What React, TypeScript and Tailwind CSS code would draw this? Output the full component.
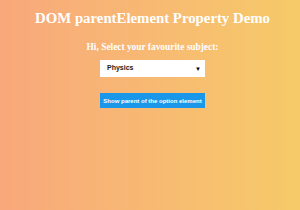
export default function App() {
  return (
    <div className="w-[300px] h-[210px] bg-linear-to-r from-[#f8a87b] to-[#f6ca68] flex flex-col items-center overflow-hidden pl-[5px]">
      <h1 className="mt-[8px] text-white text-[14.8px] font-bold leading-[20px] font-['Liberation_Serif',serif]">
        DOM parentElement Property Demo
      </h1>
      <h3 className="mt-[13px] text-white text-[9.4px] font-bold leading-[12px] font-['Liberation_Serif',serif]">
        Hi, Select your favourite subject:
      </h3>
      <div className="mt-[7px] w-[105px] h-[17px] bg-white flex items-center justify-between pl-[7px] pr-[4px] font-['Liberation_Sans',sans-serif]">
        <span className="text-[7px] font-bold text-[#222]">Physics</span>
        <span className="text-[6px] text-black leading-none">▼</span>
      </div>
      <button className="mt-[16px] w-[105px] h-[15px] bg-[#1a97e8] text-white text-[6px] font-bold whitespace-nowrap font-['Liberation_Sans',sans-serif] leading-none">
        Show parent of the option element
      </button>
    </div>
  );
}
